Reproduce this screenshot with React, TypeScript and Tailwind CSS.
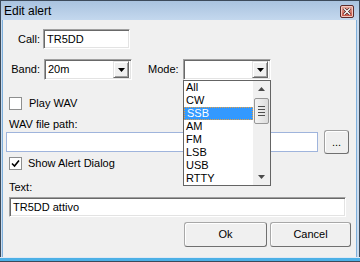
import React from "react";

const sunken =
  "border border-t-[#a0a0a0] border-l-[#a0a0a0] border-r-white border-b-white shadow-[inset_1px_1px_0_#696969,inset_-1px_-1px_0_#e3e3e3] bg-white";

function ArrowDown({ color = "#000" }: { color?: string }) {
  return (
    <svg width="7" height="4" viewBox="0 0 7 4">
      <path d="M0 0h7L3.5 4z" fill={color} />
    </svg>
  );
}

function ComboButton() {
  return (
    <div className="flex h-[17px] w-[16px] items-center justify-center border border-t-[#e3e3e3] border-l-[#e3e3e3] border-r-[#696969] border-b-[#696969] bg-[#f0f0f0] shadow-[inset_1px_1px_0_#fff,inset_-1px_-1px_0_#a0a0a0]">
      <ArrowDown />
    </div>
  );
}

function Combo({ value }: { value: string }) {
  return (
    <div className={`flex h-[21px] w-[88px] items-center justify-between pl-[3px] pr-[2px] ${sunken}`}>
      <span className="text-[11px] leading-[13px]">{value}</span>
      <ComboButton />
    </div>
  );
}

function Check({ checked }: { checked?: boolean }) {
  return (
    <div className="flex h-[13px] w-[13px] items-center justify-center border border-[#8e8f8f] bg-white">
      {checked && (
        <svg width="9" height="9" viewBox="0 0 9 9">
          <path d="M1 4.5l2.5 2.5L8 1.5" fill="none" stroke="#000" strokeWidth="1.6" />
        </svg>
      )}
    </div>
  );
}

const modes = ["All", "CW", "SSB", "AM", "FM", "LSB", "USB", "RTTY"];

export default function App() {
  return (
    <div className="flex h-[262px] w-[360px] flex-col bg-[#2e3b4a] p-0 font-['Liberation_Sans',Arial,sans-serif] text-black">
      {/* Title bar */}
      <div className="flex h-[20px] items-center justify-between border-t border-l border-r border-[#3c4a5a] bg-gradient-to-b from-[#a9c3df] to-[#c4d8ee] pl-[3px] pr-[5px]">
        <span className="text-[12px] leading-[14px] text-black">Edit alert</span>
        <div className="mt-[2px] flex h-[13px] w-[14px] items-center justify-center rounded-[2px] border border-[#5b2b2b] bg-gradient-to-b from-[#e6aaa0] to-[#c4493b] shadow-[inset_0_0_0_1px_#f2c8c0]">
          <svg width="8" height="7" viewBox="0 0 8 7">
            <path d="M1 0.5l6 6M7 0.5l-6 6" stroke="#3a1a1a" strokeWidth="2.6" />
            <path d="M1 0.5l6 6M7 0.5l-6 6" stroke="#fff" strokeWidth="1.4" />
          </svg>
        </div>
      </div>

      <div className="flex h-[237px]">
        {/* left frame */}
        <div className="flex w-[3px]">
          <div className="w-px bg-[#3c4a5a]" />
          <div className="w-px bg-[#c9dbee]" />
          <div className="w-px bg-[#7fb0dc]" />
        </div>

        {/* content */}
        <div className="relative flex w-[353px] flex-col bg-[#f0f0f0]">
          {/* Call */}
          <div className="mt-[9px] flex h-[20px] items-center">
            <span className="w-[37px] text-right text-[11px] leading-[13px]">Call:</span>
            <div className={`ml-[3px] flex h-[20px] w-[87px] items-center pl-[3px] ${sunken}`}>
              <span className="text-[11px] leading-[13px]">TR5DD</span>
            </div>
          </div>

          {/* Band / Mode */}
          <div className="mt-[10px] flex h-[21px] items-center">
            <span className="w-[37px] text-right text-[11px] leading-[13px]">Band:</span>
            <div className="ml-[4px]">
              <Combo value="20m" />
            </div>
            <span className="ml-[16px] w-[35px] text-[11px] leading-[13px]">Mode:</span>
            <Combo value="" />
          </div>

          {/* Play WAV */}
          <div className="mt-[17px] flex h-[13px] items-center pl-[6px]">
            <Check />
            <span className="ml-[7px] text-[11px] leading-[13px]">Play WAV</span>
          </div>

          <span className="mt-[8px] pl-[6px] text-[11px] leading-[12px]">WAV file path:</span>

          <div className="flex h-[24px] items-center">
            <div className="ml-[3px] h-[20px] w-[312px] border border-[#9fb4dc] bg-white" />
            <div className="ml-[6px] flex h-[24px] w-[25px] items-center justify-center rounded-[3px] border border-[#a0a0a0] border-r-[#707070] border-b-[#707070] bg-[#efefef] shadow-[inset_1px_1px_0_#fff]">
              <span className="text-[11px] leading-[13px]">...</span>
            </div>
          </div>

          {/* Show Alert Dialog */}
          <div className="mt-[3px] flex h-[13px] items-center pl-[6px]">
            <Check checked />
            <span className="ml-[6px] text-[11px] leading-[13px]">Show Alert Dialog</span>
          </div>

          <span className="mt-[11px] pl-[6px] text-[11px] leading-[12px]">Text:</span>

          <div className={`ml-[6px] mt-[4px] flex h-[20px] w-[337px] items-center pl-[3px] ${sunken}`}>
            <span className="text-[11px] leading-[13px]">TR5DD attivo</span>
          </div>

          {/* Buttons */}
          <div className="mt-[5px] flex justify-end gap-[3px] pr-[5px]">
            <div className="flex h-[25px] w-[83px] items-center justify-center rounded-[3px] border border-[#a8a8a8] border-r-[#707070] border-b-[#707070] bg-[#f0f0f0] shadow-[inset_1px_1px_0_#fff]">
              <span className="text-[11px] leading-[13px]">Ok</span>
            </div>
            <div className="flex h-[25px] w-[81px] items-center justify-center rounded-[3px] border border-[#a8a8a8] border-r-[#707070] border-b-[#707070] bg-[#f0f0f0] shadow-[inset_1px_1px_0_#fff]">
              <span className="text-[11px] leading-[13px]">Cancel</span>
            </div>
          </div>

          {/* Dropdown list */}
          <div className="absolute left-[180px] top-[60px] flex h-[106px] w-[88px] border border-[#646464] bg-white">
            <div className="flex w-[69px] flex-col">
              {modes.map((m) => (
                <div
                  key={m}
                  className={`flex h-[13px] items-center pl-[2px] text-[11px] leading-[13px] ${
                    m === "SSB"
                      ? "border border-dotted border-[#e8a040] bg-[#3399ff] pl-[1px] text-white"
                      : ""
                  }`}
                >
                  {m}
                </div>
              ))}
            </div>
            {/* scrollbar */}
            <div className="flex w-[17px] flex-col items-center bg-[#f0f0f0]">
              <div className="flex h-[16px] items-center justify-center">
                <svg width="7" height="4" viewBox="0 0 7 4">
                  <path d="M3.5 0L7 4H0z" fill="#4a4a4a" />
                </svg>
              </div>
              <div className="mt-px flex h-[26px] w-[15px] flex-col items-center justify-center gap-[2px] rounded-[2px] border border-[#979797] bg-gradient-to-r from-[#f4f4f4] to-[#dcdcdc]">
                <div className="h-px w-[7px] bg-[#4e4e4e]" />
                <div className="h-px w-[7px] bg-[#4e4e4e]" />
                <div className="h-px w-[7px] bg-[#4e4e4e]" />
                <div className="h-px w-[7px] bg-[#4e4e4e]" />
              </div>
              <div className="flex-1" />
              <div className="flex h-[16px] items-center justify-center">
                <ArrowDown color="#4a4a4a" />
              </div>
            </div>
          </div>
        </div>

        {/* right frame */}
        <div className="flex w-[4px]">
          <div className="w-px bg-[#7fb0dc]" />
          <div className="w-[2px] bg-[#c9dbee]" />
          <div className="w-px bg-[#3c4a5a]" />
        </div>
      </div>

      {/* bottom frame */}
      <div className="flex h-[5px] flex-col">
        <div className="h-px bg-[#dfe9f5]" />
        <div className="h-[3px] bg-[#4cb0e6]" />
        <div className="h-px bg-[#3c4a5a]" />
      </div>
    </div>
  );
}
